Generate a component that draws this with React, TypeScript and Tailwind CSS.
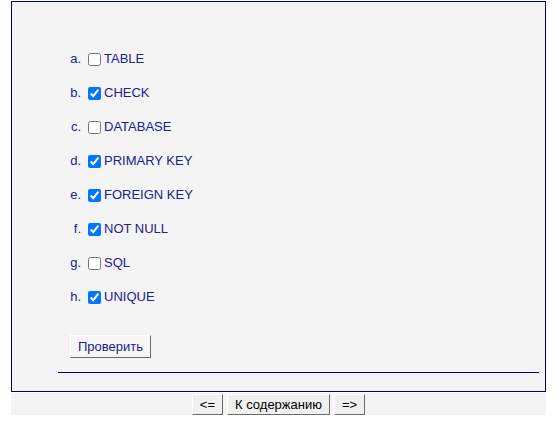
const options = [
  { letter: "a.", label: "TABLE", checked: false },
  { letter: "b.", label: "CHECK", checked: true },
  { letter: "c.", label: "DATABASE", checked: false },
  { letter: "d.", label: "PRIMARY KEY", checked: true },
  { letter: "e.", label: "FOREIGN KEY", checked: true },
  { letter: "f.", label: "NOT NULL", checked: true },
  { letter: "g.", label: "SQL", checked: false },
  { letter: "h.", label: "UNIQUE", checked: true },
];

const btn =
  "h-[21px] border border-t-white border-l-white border-r-[#6b6b6b] border-b-[#6b6b6b] bg-[#f0f0f0] px-[7px] text-[13px] leading-none text-black";

export default function App() {
  return (
    <div className="h-[432px] w-[559px] bg-white font-['Liberation_Sans',Arial,sans-serif]">
      {/* Question panel */}
      <div className="ml-[11px] mt-[1px] h-[391px] w-[535px] border border-[#000080] bg-[#f4f4f4]">
        <ol className="pt-[40px]">
          {options.map((opt) => (
            <li key={opt.letter} className="flex h-[34px] items-center text-[13px] text-[#202090]">
              <span className="w-[69px] text-right">{opt.letter}</span>
              <input
                type="checkbox"
                defaultChecked={opt.checked}
                className="ml-[7px] mr-[3px] h-[13px] w-[13px]"
              />
              <span>{opt.label}</span>
            </li>
          ))}
        </ol>

        <div className="ml-[58px] mt-[20px]">
          <button className="h-[23px] border border-t-white border-l-white border-r-[#6b6b6b] border-b-[#6b6b6b] bg-[#f6f6f6] px-[7px] text-[13px] text-[#202090]">
            Проверить
          </button>
        </div>

        <div className="ml-[46px] mr-[6px] mt-[14px] border-t border-[#000080]" />
      </div>

      {/* Navigation */}
      <div className="ml-[11px] mt-[1px] flex h-[22px] w-[535px] items-center justify-center gap-[4px] bg-[#f4f4f4]">
        <button className={btn}>&lt;=</button>
        <button className={btn}>К содержанию</button>
        <button className={btn}>=&gt;</button>
      </div>
    </div>
  );
}
